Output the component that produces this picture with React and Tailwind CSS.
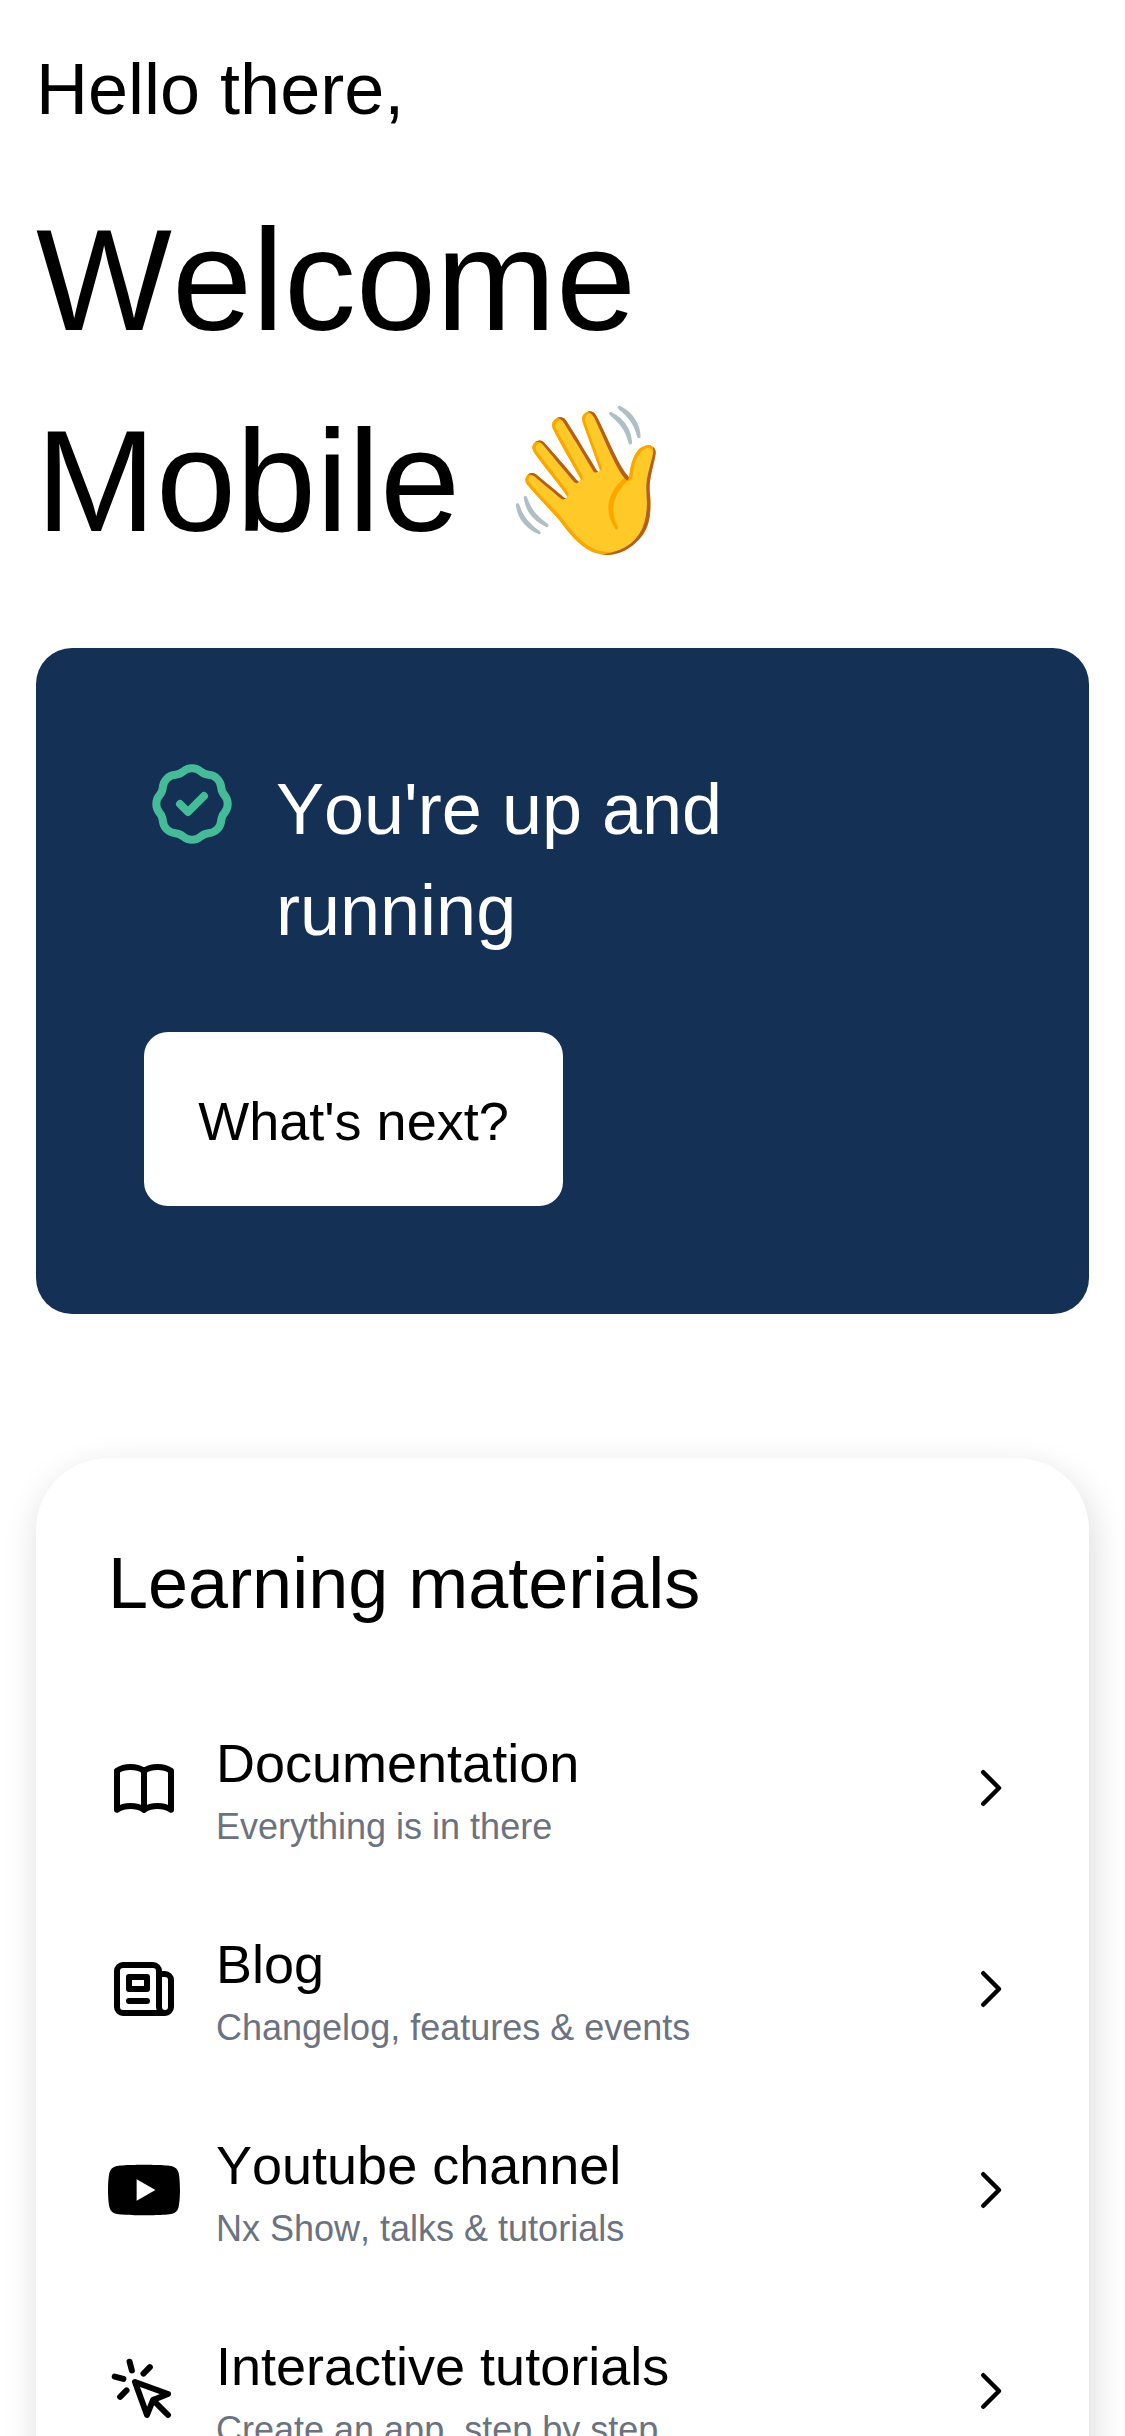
const stroke = {
  fill: 'none',
  stroke: 'currentColor',
  strokeWidth: 2,
  strokeLinecap: 'round',
  strokeLinejoin: 'round',
  viewBox: '0 0 24 24',
};

const materials = [
  {
    title: 'Documentation',
    note: 'Everything is in there',
    icon: (
      <svg {...stroke} className="size-[72px] shrink-0">
        <path d="M12 6.253v13m0-13C10.832 5.477 9.246 5 7.5 5S4.168 5.477 3 6.253v13C4.168 18.477 5.754 18 7.5 18s3.332.477 4.5 1.253m0-13C13.168 5.477 14.754 5 16.5 5c1.747 0 3.332.477 4.5 1.253v13C19.832 18.477 18.247 18 16.5 18c-1.746 0-3.332.477-4.5 1.253" />
      </svg>
    ),
  },
  {
    title: 'Blog',
    note: 'Changelog, features & events',
    icon: (
      <svg {...stroke} className="size-[72px] shrink-0">
        <path d="M19 20H5a2 2 0 01-2-2V6a2 2 0 012-2h10a2 2 0 012 2v1m2 13a2 2 0 01-2-2V7m2 13a2 2 0 002-2V9a2 2 0 00-2-2h-2m-4-3H9M7 16h6M7 8h6v4H7V8z" />
      </svg>
    ),
  },
  {
    title: 'Youtube channel',
    note: 'Nx Show, talks & tutorials',
    icon: (
      <svg viewBox="0 0 24 24" fill="currentColor" className="size-[72px] shrink-0">
        <path d="M23.498 6.186a3.016 3.016 0 0 0-2.122-2.136C19.505 3.545 12 3.545 12 3.545s-7.505 0-9.377.505A3.017 3.017 0 0 0 .502 6.186C0 8.07 0 12 0 12s0 3.93.502 5.814a3.016 3.016 0 0 0 2.122 2.136c1.871.505 9.376.505 9.376.505s7.505 0 9.377-.505a3.015 3.015 0 0 0 2.122-2.136C24 15.93 24 12 24 12s0-3.93-.502-5.814zM9.545 15.568V8.432L15.818 12l-6.273 3.568z" />
      </svg>
    ),
  },
  {
    title: 'Interactive tutorials',
    note: 'Create an app, step by step',
    icon: (
      <svg {...stroke} className="size-[72px] shrink-0">
        <path d="M15 15l-2 5L9 9l11 4-5 2zm0 0l5 5M7.188 2.239l.777 2.897M5.136 7.965l-2.898-.777M13.95 4.05l-2.122 2.122m-5.657 5.656l-2.12 2.122" />
      </svg>
    ),
  },
];

function Material({ icon, title, note }) {
  return (
    <li className="flex h-[201px] items-center">
      {icon}
      <div className="ml-9 flex-1 pt-0.5">
        <div className="text-[54px] leading-[76px]">{title}</div>
        <div className="pt-px text-[36px] leading-[50px] text-[#6b7280]">{note}</div>
      </div>
      <svg {...stroke} className="size-[54px] shrink-0">
        <path d="M9 5l7 7-7 7" />
      </svg>
    </li>
  );
}

export default function App() {
  return (
    <div className="h-[2436px] w-full overflow-hidden bg-white px-9 pt-[39px] font-['Liberation_Sans',sans-serif] text-black [font-kerning:none]">
      <p className="text-[72px] leading-[101px]">Hello there,</p>
      <h1 className="mt-10 h-[468px] text-[144px] leading-[201px]">
        Welcome
        <br />
        Mobile 👋
      </h1>

      <section className="h-[666px] rounded-[36px] bg-[#143055] p-[108px]">
        <div className="flex h-[276px] items-start">
          <svg {...stroke} className="size-24 shrink-0 text-[#45bc98]">
            <path d="M9 12l2 2 4-4M7.835 4.697a3.42 3.42 0 001.946-.806 3.42 3.42 0 014.438 0 3.42 3.42 0 001.946.806 3.42 3.42 0 013.138 3.138 3.42 3.42 0 00.806 1.946 3.42 3.42 0 010 4.438 3.42 3.42 0 00-.806 1.946 3.42 3.42 0 01-3.138 3.138 3.42 3.42 0 00-1.946.806 3.42 3.42 0 01-4.438 0 3.42 3.42 0 00-1.946-.806 3.42 3.42 0 01-3.138-3.138 3.42 3.42 0 00-.806-1.946 3.42 3.42 0 010-4.438 3.42 3.42 0 00.806-1.946 3.42 3.42 0 013.138-3.138z" />
          </svg>
          <h2 className="mt-[3px] ml-9 text-[72px] leading-[101px] text-white">
            You&apos;re up and
            <br />
            running
          </h2>
        </div>
        <button className="flex h-[174px] w-[419px] items-center justify-center rounded-3xl bg-white pt-1 text-[54px] leading-[76px] whitespace-nowrap">
          What&apos;s next?
        </button>
      </section>

      <section className="mt-36 rounded-[72px] bg-white px-[72px] pt-[75px] pb-[72px] shadow-[3px_12px_36px_rgba(0,0,0,0.15)]">
        <h2 className="h-[154px] text-[72px] leading-[101px]">Learning materials</h2>
        <ul>
          {materials.map((m) => (
            <Material key={m.title} {...m} />
          ))}
        </ul>
      </section>
    </div>
  );
}
